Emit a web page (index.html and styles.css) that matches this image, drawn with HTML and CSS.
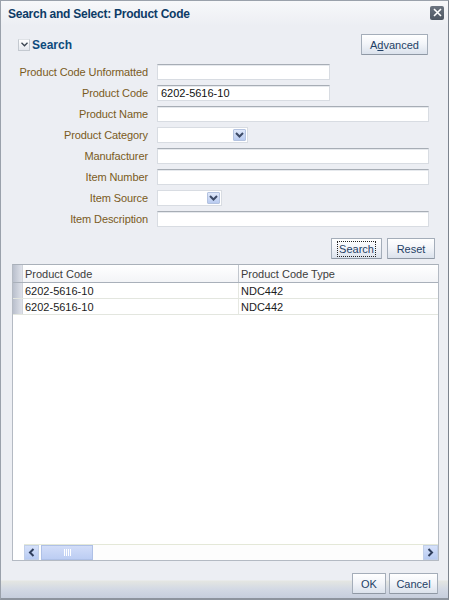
FILE: index.html
```html
<!DOCTYPE html>
<html>
<head>
<meta charset="utf-8">
<link rel="stylesheet" href="styles.css">
</head>
<body>
<div class="dialog">
  <div class="titlebar">
    <span class="title">Search and Select: Product Code</span>
    <span class="close"><svg width="9" height="9" viewBox="0 0 9 9"><path d="M1 1L8 8M8 1L1 8" stroke="#fff" stroke-width="1.6"/></svg></span>
  </div>
  <div class="content">
    <div class="search-head">
      <div class="disclose">
        <span class="chev"><svg width="7" height="5" viewBox="0 0 7 5"><path d="M0.5 0.8L3.5 3.8L6.5 0.8" fill="none" stroke="#3a4450" stroke-width="1.3"/></svg></span>
        <span class="head-text">Search</span>
      </div>
      <button class="btn adv">A<u>d</u>vanced</button>
    </div>
    <div class="form">
      <label>Product Code Unformatted</label><div class="field"><span class="input short"></span></div>
      <label>Product Code</label><div class="field"><span class="input short">6202-5616-10</span></div>
      <label>Product Name</label><div class="field"><span class="input long"></span></div>
      <label>Product Category</label><div class="field"><span class="input sel cat"><span class="drop"><svg width="9" height="6" viewBox="0 0 9 6"><path d="M1 1L4.5 4.5L8 1" fill="none" stroke="#3c4a66" stroke-width="2"/></svg></span></span></div>
      <label>Manufacturer</label><div class="field"><span class="input long"></span></div>
      <label>Item Number</label><div class="field"><span class="input long"></span></div>
      <label>Item Source</label><div class="field"><span class="input sel src"><span class="drop"><svg width="9" height="6" viewBox="0 0 9 6"><path d="M1 1L4.5 4.5L8 1" fill="none" stroke="#3c4a66" stroke-width="2"/></svg></span></span></div>
      <label>Item Description</label><div class="field"><span class="input long"></span></div>
    </div>
    <div class="actions">
      <button class="btn search"><span class="focus">Search</span></button>
      <button class="btn reset">Reset</button>
    </div>
    <div class="table">
      <div class="row hrow">
        <span class="sel-cell"></span>
        <span class="cell c1">Product Code</span>
        <span class="cell c2">Product Code Type</span>
      </div>
      <div class="row">
        <span class="sel-cell"></span>
        <span class="cell c1">6202-5616-10</span>
        <span class="cell c2">NDC442</span>
      </div>
      <div class="row">
        <span class="sel-cell"></span>
        <span class="cell c1">6202-5616-10</span>
        <span class="cell c2">NDC442</span>
      </div>
      <div class="spacer"></div>
      <div class="hscroll">
        <span class="arrow"><svg width="7" height="9" viewBox="0 0 7 9"><path d="M5.5 1L2 4.5L5.5 8" fill="none" stroke="#2f3e5c" stroke-width="2"/></svg></span>
        <span class="thumb"><span class="grip"></span></span>
        <span class="track"></span>
        <span class="arrow"><svg width="7" height="9" viewBox="0 0 7 9"><path d="M1.5 1L5 4.5L1.5 8" fill="none" stroke="#2f3e5c" stroke-width="2"/></svg></span>
      </div>
    </div>
  </div>
  <div class="footer">
    <button class="btn ok">OK</button>
    <button class="btn cancel">Cancel</button>
  </div>
</div>
</body>
</html>
```

FILE: styles.css
```css
html, body {
  margin: 0;
  padding: 0;
  background: #eceef3;
}
.dialog {
  width: 449px;
  height: 600px;
  box-sizing: border-box;
  border: 1px solid #9aa1ab;
  border-right-color: #7c838d;
  border-bottom: 2px solid #8d949e;
  background: #eceef3;
  display: flex;
  flex-direction: column;
  font-family: "Liberation Sans", Arial, sans-serif;
  font-size: 11px;
}
.titlebar {
  height: 25px;
  display: flex;
  align-items: center;
  justify-content: space-between;
  padding: 0 4px 0 7px;
  background: linear-gradient(#f7f8fa, #eceef3);
}
.title {
  font-weight: bold;
  font-size: 12px;
  color: #0d3b66;
  letter-spacing: -0.25px;
}
.close {
  width: 14px;
  height: 14px;
  border-radius: 2px;
  background: linear-gradient(#6b7480, #4d5662);
  display: flex;
  align-items: center;
  justify-content: center;
  margin-top: -2px;
}
.content {
  flex: 1;
  display: flex;
  flex-direction: column;
  padding: 0 8px 0 10px;
}
.search-head {
  display: flex;
  justify-content: space-between;
  align-items: center;
  margin-top: 8px;
  padding-left: 7px;
  padding-right: 12px;
}
.disclose {
  display: flex;
  align-items: center;
  gap: 2px;
}
.chev {
  width: 10px;
  height: 10px;
  border: 1px solid #c4c9d0;
  border-top-color: #dfe2e6;
  background: linear-gradient(#ffffff, #e5e8ee);
  display: flex;
  align-items: center;
  justify-content: center;
}
.head-text {
  font-weight: bold;
  font-size: 12px;
  color: #0d4a7c;
}
.btn {
  font-family: "Liberation Sans", Arial, sans-serif;
  font-size: 11px;
  color: #1f3f66;
  height: 21px;
  padding: 0 8px;
  border: 1px solid #a4adb9;
  border-bottom-color: #8f98a4;
  border-radius: 1px;
  background: linear-gradient(#ffffff 0%, #f3f5f9 45%, #dbe2ec 100%);
  box-sizing: border-box;
  display: flex;
  align-items: center;
  justify-content: center;
}
.adv {
  width: 67px;
  height: 21px;
}
.form {
  display: grid;
  grid-template-columns: 137px auto;
  column-gap: 9px;
  row-gap: 5px;
  margin-top: 9px;
}
.form label {
  text-align: right;
  color: #7a5b1c;
  line-height: 16px;
  white-space: nowrap;
  letter-spacing: -0.1px;
}
.field {
  display: flex;
  align-items: center;
}
.input {
  height: 16px;
  box-sizing: border-box;
  background: #fff;
  border: 1px solid #d8dce2;
  border-top-color: #a7adb5;
  box-shadow: inset 0 1px 0 #e6e9ed;
  color: #111;
  padding-left: 3px;
  line-height: 15px;
  display: flex;
  align-items: center;
  position: relative;
}
.short { width: 173px; }
.long { width: 272px; }
.sel { border-color: #d8dce2; border-top-color: #d8dce2; box-shadow: none; height: 16px; }
.cat { width: 91px; }
.src { width: 65px; }
.drop {
  position: absolute;
  right: 1px;
  top: 1px;
  width: 13px;
  height: 12px;
  background: linear-gradient(#dfe8fa, #b9cbf0);
  border: 1px solid #b4c3e0;
  border-radius: 1px;
  box-sizing: border-box;
  display: flex;
  align-items: center;
  justify-content: center;
}
.actions {
  display: flex;
  justify-content: flex-end;
  gap: 5px;
  margin-top: 11px;
  padding-right: 5px;
}
.search {
  width: 51px;
  padding: 0 2px;
}
.focus {
  border: 1px dotted #222;
  padding: 1px 1px;
  line-height: 12px;
}
.reset { width: 48px; }
.table {
  margin-top: 5px;
  margin-left: 1px;
  width: 427px;
  flex: 1;
  border: 1px solid #b4bac3;
  border-top-color: #a9b0b9;
  background: #fff;
  display: flex;
  flex-direction: column;
  box-sizing: border-box;
}
.row {
  display: flex;
  height: 15px;
  border-bottom: 1px solid #e3e6df;
  color: #1c1c1c;
}
.hrow {
  height: 17px;
  border-bottom: 1px solid #a9b0ba;
  background: linear-gradient(#ffffff, #f3f4f7);
  color: #3c3c3c;
}
.sel-cell {
  width: 10px;
  box-sizing: border-box;
  flex: none;
  background: linear-gradient(to right, #b9bfcc, #dfe2ea);
  border-right: 1px solid #d0d4db;
}
.cell {
  display: flex;
  align-items: center;
  padding-left: 2px;
  white-space: nowrap;
  box-sizing: border-box;
}
.c1 {
  width: 216px;
  border-right: 1px solid #e6e8e2;
}
.hrow .c1 { border-right-color: #c2c7ce; }
.c2 { flex: 1; padding-left: 2px; }
.spacer { flex: 1; }
.hscroll {
  height: 16px;
  margin-left: 11px;
  display: flex;
  align-items: stretch;
  border-top: 1px solid #e4e8d8;
  background: #fdfdfd;
  box-sizing: border-box;
}
.arrow {
  width: 15px;
  flex: none;
  background: linear-gradient(#d6e1fa, #b8cbf2);
  border: 1px solid #c1cfe8;
  box-sizing: border-box;
  display: flex;
  align-items: center;
  justify-content: center;
}
.thumb {
  width: 52px;
  margin-left: 2px;
  flex: none;
  background: linear-gradient(#d2ddf8, #bccdf3);
  border: 1px solid #aec0e6;
  box-sizing: border-box;
  display: flex;
  align-items: center;
  justify-content: center;
}
.grip {
  width: 7px;
  height: 7px;
  background: repeating-linear-gradient(to right, #ffffff 0 1px, transparent 1px 2px);
}
.track { flex: 1; }
.footer {
  height: 37px;
  flex: none;
  box-sizing: border-box;
  padding: 12px 10px 0 0;
  display: flex;
  justify-content: flex-end;
  align-items: flex-start;
  gap: 3px;
  background: linear-gradient(#eceef3 0, #eceef3 19px, #e4e6e2 20px, #d3d9e4 28px, #c6cedd 100%);
}
.ok { width: 34px; }
.cancel { width: 49px; }
```
